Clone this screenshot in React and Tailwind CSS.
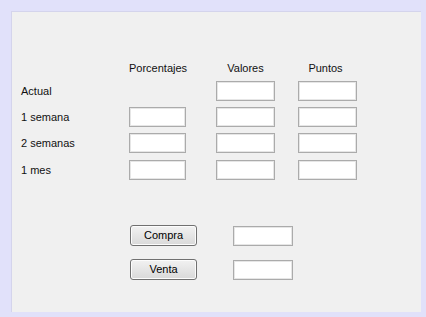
import React from "react";

const font = { fontFamily: '"Liberation Sans", Arial, sans-serif' };

function Box({ w = "w-[59px]", h = "h-[20px]" }) {
  return (
    <div
      className={`${w} ${h} bg-white border border-[#ababab] shadow-[inset_0_0_0_1px_#e6e6e6]`}
    />
  );
}

function Row({ label, first = true }) {
  return (
    <div className="flex items-center h-[20px]">
      <div className="w-[117px] pl-[9px] text-[11px] text-[#111]">{label}</div>
      <div className="w-[57px]">{first && <Box w="w-[57px]" />}</div>
      <div className="ml-[30px]">
        <Box />
      </div>
      <div className="ml-[23px]">
        <Box />
      </div>
    </div>
  );
}

function Btn({ children }) {
  return (
    <button className="w-[67px] h-[21px] rounded-[3px] border border-[#707070] bg-gradient-to-b from-[#f2f2f2] to-[#d9d9d9] text-[11px] text-black shadow-[inset_0_0_0_1px_#fcfcfc]">
      {children}
    </button>
  );
}

export default function App() {
  return (
    <div
      className="w-[426px] h-[317px] bg-[#e1e1fa] pl-[11px] pt-[11px] pr-[5px] pb-[5px]"
      style={font}
    >
      <div className="w-full h-full bg-[#f0f0f0] border-l border-t border-[#d4d4ec] flex flex-col">
        <div className="flex items-center h-[13px] mt-[50px] text-[11px] text-[#111]">
          <div className="w-[117px]" />
          <div className="w-[57px] text-center">Porcentajes</div>
          <div className="ml-[30px] w-[59px] text-center">Valores</div>
          <div className="ml-[23px] w-[59px] text-center pr-[4px]">Puntos</div>
        </div>
        <div className="mt-[6px] flex flex-col gap-[6px]">
          <Row label="Actual" first={false} />
          <Row label="1 semana" />
          <div className="flex flex-col gap-[7px]">
            <Row label="2 semanas" />
            <Row label="1 mes" />
          </div>
        </div>
        <div className="mt-[45px] flex flex-col gap-[13px]">
          <div className="flex items-center">
            <div className="w-[118px]" />
            <Btn>Compra</Btn>
            <div className="ml-[36px]">
              <Box w="w-[60px]" />
            </div>
          </div>
          <div className="flex items-center">
            <div className="w-[118px]" />
            <Btn>Venta</Btn>
            <div className="ml-[36px]">
              <Box w="w-[60px]" />
            </div>
          </div>
        </div>
      </div>
    </div>
  );
}
